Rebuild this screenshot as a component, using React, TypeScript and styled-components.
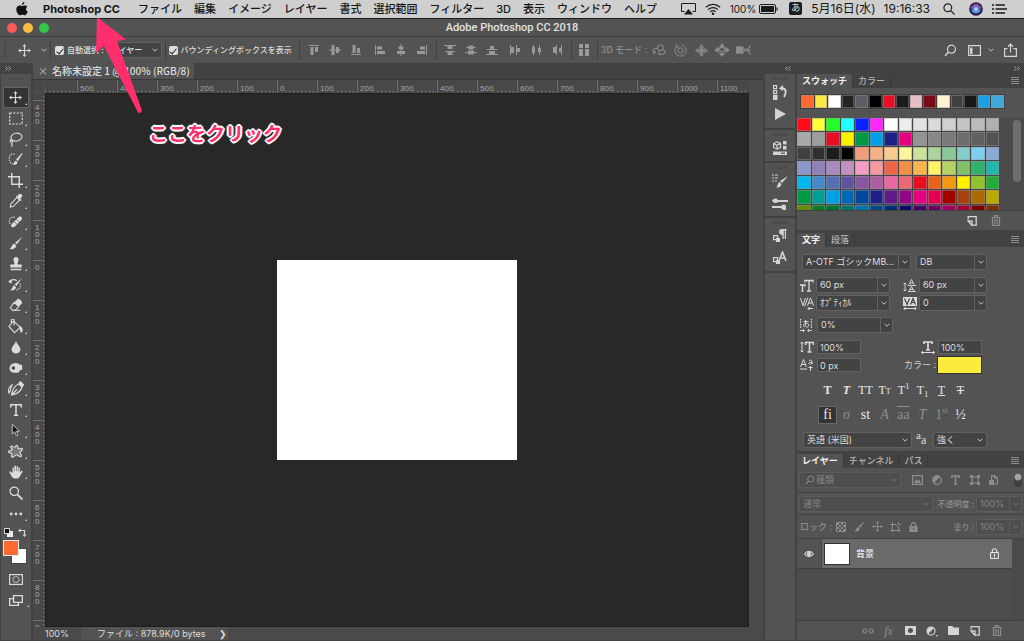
import React, { useLayoutEffect, useRef, useState } from "react";
import styled, { createGlobalStyle, css } from "styled-components";

const sans = `Inter, "Noto Sans CJK JP", sans-serif`;

const GlobalStyle = createGlobalStyle`
  * { box-sizing: border-box; }
  html, body { margin: 0; padding: 0; background: #424242; }
  button, input, select { font: inherit; color: inherit; margin: 0; }
  svg { display: block; flex: none; }
`;

const Shell = styled.div`
  position: relative;
  display: flex;
  flex-direction: column;
  height: 100vh;
  overflow: hidden;
  background: #424242;
  color: #dedede;
  font: 9px/12px ${sans};
  white-space: nowrap;
`;

/* ---------- shared pieces ---------- */

const IconButton = styled.button<{ $w?: number; $h?: number; $dim?: boolean; $on?: boolean }>`
  display: flex;
  align-items: center;
  justify-content: center;
  flex: none;
  width: ${(p) => p.$w ?? 21}px;
  height: ${(p) => p.$h ?? 20}px;
  padding: 0;
  border: 0;
  border-radius: 2px;
  background: ${(p) => (p.$on ? "#343434" : "none")};
  color: ${(p) => (p.$dim ? "#8c8c8c" : "#d4d4d4")};
`;

const Spacer = styled.div`
  flex: 1;
`;

type IconProps = { w?: number; h?: number; box?: string; children: React.ReactNode };
const Icon = ({ w = 16, h = 16, box = "0 0 16 16", children }: IconProps) => (
  <svg width={w} height={h} viewBox={box} fill="none" stroke="currentColor" strokeWidth="1.2" aria-hidden="true">
    {children}
  </svg>
);

const Chevron = ({ size = 6 }: { size?: number }) => (
  <svg width={size} height={size} viewBox="0 0 6 6" fill="none" stroke="currentColor" strokeWidth="1" opacity=".85" aria-hidden="true">
    <path d="M.6 1.8 3 4.2l2.4-2.4" />
  </svg>
);

const Field = styled.div<{ $w: number; $split?: boolean; $dim?: boolean }>`
  display: grid;
  grid-template-columns: 1fr 12px;
  align-items: center;
  flex: none;
  width: ${(p) => p.$w}px;
  height: 16px;
  border: 1px solid ${(p) => (p.$dim ? "#5c5c5c" : "#626262")};
  border-radius: 2px;
  background: ${(p) => (p.$dim ? "#4e4e4e" : "#434343")};
  color: ${(p) => (p.$dim ? "#7c7c7c" : "#dedede")};
  select {
    grid-area: 1 / 1 / 2 / 3;
    width: 100%;
    height: 14px;
    padding: 0 12px 0 3px;
    border: 0;
    background: none;
    appearance: none;
    line-height: 14px;
    text-overflow: ellipsis;
  }
  > span {
    grid-area: 1 / 2 / 2 / 3;
    display: flex;
    align-items: center;
    justify-content: center;
    height: 14px;
    pointer-events: none;
    ${(p) => p.$split && css`border-left: 1px solid ${p.$dim ? "#5c5c5c" : "#626262"};`}
  }
`;

type SelectProps = { label: string; value: string; w: number; split?: boolean; dim?: boolean };
const Select = ({ label, value, w, split, dim }: SelectProps) => (
  <Field $w={w} $split={split} $dim={dim}>
    <select aria-label={label} defaultValue={value}>
      <option>{value}</option>
    </select>
    <span><Chevron /></span>
  </Field>
);

/* ---------- system menu bar ---------- */

const MenuBar = styled.header`
  display: flex;
  align-items: center;
  flex: none;
  height: 19px;
  padding: 0 17px 1px 16px;
  border-bottom: 1px solid #1c1c1c;
  background: #cfcfcf;
  color: #161616;
  font-size: 11px;
`;

const MenuList = styled.nav`
  display: flex;
  align-items: center;
  gap: 12px;
  margin-left: 15px;
`;

const MenuItem = styled.button<{ $bold?: boolean }>`
  margin-right: ${(p) => (p.$bold ? 6 : 0)}px;
  padding: 0;
  border: 0;
  background: none;
  font-weight: ${(p) => (p.$bold ? 700 : 500)};
`;

const StatusArea = styled.div`
  display: flex;
  align-items: center;
  margin-left: auto;
`;

const Battery = styled.div`
  display: flex;
  align-items: center;
  gap: 3px;
  margin: 0 11px 0 9px;
  font-size: 10px;
`;

const InputSource = styled.div`
  width: 13px;
  height: 13px;
  margin-right: 9px;
  border-radius: 2px;
  background: #1d1d1d;
  color: #e4e4e4;
  font-size: 9px;
  line-height: 12px;
  text-align: center;
`;

const Clock = styled.time`
  display: flex;
  gap: 8px;
  margin-right: 13px;
  font-size: 12px;
  line-height: 14px;
`;

const menus = ["ファイル", "編集", "イメージ", "レイヤー", "書式", "選択範囲", "フィルター", "3D", "表示", "ウィンドウ", "ヘルプ"];

const SystemBar = () => (
  <MenuBar>
    <svg width="12" height="14" viewBox="0 0 12 14" fill="#111" aria-label="Apple">
      <path d="M8.300 0c.1 1.600-1 2.900-2.500 3C5.700 1.500 7 .2 8.300 0ZM11.300 4.700C9.400 6 9.700 8.700 11.800 9.600 11.100 11.600 9.900 13.300 8.800 13.300 7.900 13.300 7.500 12.800 6.400 12.800 5.300 12.800 4.800 13.300 4 13.300 2.400 13.300.3 10.100.3 7.300.3 4.800 1.900 3.400 3.600 3.400 4.700 3.400 5.500 4.100 6.200 4.100 6.900 4.100 7.800 3.400 9 3.400c.9 0 1.800.500 2.300 1.300Z" />
    </svg>
    <MenuList>
      <MenuItem $bold>Photoshop CC</MenuItem>
      {menus.map((m) => <MenuItem key={m}>{m}</MenuItem>)}
    </MenuList>
    <StatusArea>
      <svg width="15" height="12" viewBox="0 0 15 12" fill="none" stroke="#1b1b1b" aria-label="AirPlay">
        <path d="M3.500 8.500H.5v-8h14v8h-3" /><path d="M7.500 6 12 11.500H3Z" fill="#1b1b1b" stroke="none" />
      </svg>
      <svg width="25" height="12" viewBox="-9 0 25 12" fill="none" stroke="#1b1b1b" strokeWidth="1.200" aria-label="Wi-Fi">
        <path d="M.8 4.200a10.500 10.500 0 0 1 14.400 0M3 6.600a7.300 7.300 0 0 1 10 0M5.200 8.900a4.200 4.200 0 0 1 5.600 0" />
        <circle cx="8" cy="10.700" r=".7" fill="#1b1b1b" />
      </svg>
      <Battery>
        100%
        <svg width="19" height="10" viewBox="0 0 19 10" fill="#1b1b1b" aria-hidden="true">
          <rect x=".5" y=".5" width="16" height="9" rx="1.500" fill="none" stroke="#1b1b1b" />
          <rect x="2" y="2" width="13" height="6" /><path d="M17.500 3v4l1.200-1V4Z" />
        </svg>
      </Battery>
      <InputSource>あ</InputSource>
      <Clock><span>5月16日(水)</span><span>19:16:33</span></Clock>
      <svg width="12" height="12" viewBox="0 0 12 12" fill="none" stroke="#222" strokeWidth="1.200" aria-label="検索">
        <circle cx="4.800" cy="4.800" r="3.900" /><path d="m7.700 7.700 3.800 3.800" />
      </svg>
      <svg width="37" height="14" viewBox="-14 0 37 14" aria-label="Siri">
        <defs>
          <radialGradient id="siri"><stop offset="0" stopColor="#dff" /><stop offset=".4" stopColor="#5a7bd8" /><stop offset=".75" stopColor="#43246f" /><stop offset="1" stopColor="#15152a" /></radialGradient>
        </defs>
        <circle cx="7" cy="7" r="6.800" fill="url(#siri)" />
        <path d="M2 6Q7-1 12 6" stroke="#d455a2" fill="none" /><path d="M3 9q4 3 8 0" stroke="#37c8dc" fill="none" />
      </svg>
      <svg width="15" height="10" viewBox="0 0 15 10" stroke="#1b1b1b" strokeWidth="1.400" aria-label="通知">
        <path d="M0 1h2M3.500 1H13M0 5h2M3.500 5H15M0 9h2M3.500 9H13" />
      </svg>
    </StatusArea>
  </MenuBar>
);

/* ---------- window title ---------- */

const TitleBar = styled.div`
  display: grid;
  grid-template-columns: 60px 1fr 60px;
  align-items: center;
  flex: none;
  height: 18px;
  border-bottom: 1px solid #3e3e3e;
  background: #535353;
  h1 { margin: 0; font: 500 11px/14px Roboto, sans-serif; text-align: center; color: #e2e2e2; }
`;

const Lights = styled.div`
  display: flex;
  gap: 6px;
  padding-left: 7px;
`;

const Light = styled.button<{ $c: string }>`
  width: 10px;
  height: 10px;
  padding: 0;
  border: 0;
  border-radius: 50%;
  background: ${(p) => p.$c};
`;

/* ---------- options bar ---------- */

const OptionsBar = styled.div`
  display: flex;
  align-items: center;
  flex: none;
  height: 26px;
  padding: 0 1px 0 4px;
  background: #535353;
  font-size: 8px;
  font-weight: 500;
`;

const Divider = styled.i<{ $m?: number }>`
  flex: none;
  width: 1px;
  height: 18px;
  margin: 0 ${(p) => p.$m ?? 4}px;
  background: #3f3f3f;
`;

const Check = styled.label`
  display: flex;
  align-items: center;
  gap: 3px;
  input {
    display: grid;
    place-content: center;
    width: 9px;
    height: 9px;
    border-radius: 2px;
    background: #dedede;
    appearance: none;
  }
  input:checked::before {
    content: "";
    width: 3px;
    height: 6px;
    border: solid #222;
    border-width: 0 1px 1px 0;
    transform: rotate(40deg);
  }
`;

const Group = styled.div<{ $gap?: number; $ml?: number }>`
  display: flex;
  align-items: center;
  gap: ${(p) => p.$gap ?? 0}px;
  margin-left: ${(p) => p.$ml ?? 0}px;
`;

const ModeLabel = styled.span`
  width: 48px;
  color: #909090;
  font-size: 9px;
`;

const Move = ({ size = 14 }: { size?: number }) => (
  <Icon w={size} h={size} box="0 0 14 14">
    <path d="M7 2v10M2 7h10" />
    <path d="m7 0 2.200 2.800H4.800ZM7 14l2.200-2.800H4.800ZM0 7l2.800-2.200v4.400ZM14 7l-2.800-2.200v4.400Z" fill="currentColor" stroke="none" />
  </Icon>
);

const alignA = [
  ["上端揃え", "M1 1h10v1H1ZM2.500 3h3v8h-3ZM7 3h3v5H7Z"],
  ["垂直中央揃え", "M0 5.500h12v1H0ZM2.500 1h3v10h-3ZM7 3h3v6H7Z"],
  ["下端揃え", "M1 10h10v1H1ZM2.500 1h3v8h-3ZM7 4h3v5H7Z"],
];
const alignB = [
  ["左端揃え", "M1 1h1v10H1ZM3 2.500h5v3H3ZM3 7h8v3H3Z"],
  ["水平中央揃え", "M5.500 0h1v12h-1ZM3.500 2.500h5v3h-5ZM2 7h8v3H2Z"],
  ["右端揃え", "M10 1h1v10h-1ZM4 2.500h5v3H4ZM1 7h8v3H1Z"],
];
const distribute = [
  ["上端を分布", "M0 1h12v1H0ZM3.500 2h5v3h-5ZM1 7h10v1H1ZM3.500 8h5v3h-5Z"],
  ["垂直中央を分布", "M1 3h10v1H1ZM3.500 1.500h5v4h-5ZM0 8h12v1H0ZM3 6.500h6v4H3Z"],
  ["下端を分布", "M1 5h10v1H1ZM4 2h4v3H4ZM0 10h12v1H0ZM3 7h6v3H3Z"],
  ["左端を分布", "M1 1h1v10H1ZM2 3h3v6H2ZM7 1h1v10H7ZM8 4h3v4H8Z"],
  ["水平中央を分布", "M3 1h1v10H3ZM2 3h3v6H2ZM9 1h1v10H9ZM8 4h3v4H8Z"],
  ["右端を分布", "M5 1h1v10H5ZM2 3h3v6H2ZM10 1h1v10h-1ZM8 4h2v4H8Z"],
];

const AlignSet = ({ items }: { items: string[][] }) => (
  <>
    {items.map(([name, d]) => (
      <IconButton key={name} aria-label={name} $dim>
        <svg width="12" height="12" viewBox="0 0 12 12" fill="#999" aria-hidden="true"><path d={d} /></svg>
      </IconButton>
    ))}
  </>
);

const Search = ({ size = 13 }: { size?: number }) => (
  <Icon w={size} h={size} box="0 0 13 13"><circle cx="7.500" cy="5.200" r="4" /><path d="M4.600 8 1 11.800" strokeWidth="1.500" /></Icon>
);

const Options = () => (
  <OptionsBar>
    <svg width="2" height="16" viewBox="0 0 2 16" stroke="#3f3f3f" strokeDasharray="1 1" aria-hidden="true"><path d="M1 0v16" strokeWidth="2" /></svg>
    <IconButton aria-label="移動ツール" $w={36}><Move size={13} /></IconButton>
    <IconButton aria-label="ツールプリセット" $w={4} $h={16}><Chevron /></IconButton>
    <Divider />
    <Check><input type="checkbox" defaultChecked />自動選択 :</Check>
    <Group $ml={3}><Select label="自動選択" value="レイヤー" w={55} /></Group>
    <Divider $m={3} />
    <Check><input type="checkbox" defaultChecked />バウンディングボックスを表示</Check>
    <Group $ml={3}><Divider /></Group>
    <AlignSet items={alignA} />
    <Group $ml={3}><AlignSet items={alignB} /></Group>
    <Divider $m={3} />
    <AlignSet items={distribute.slice(0, 3)} />
    <Group $ml={2}><AlignSet items={distribute.slice(3)} /></Group>
    <Divider $m={3} />
    <IconButton aria-label="自動整列" $dim $w={19}>
      <svg width="10" height="12" viewBox="0 0 10 12" fill="#999" aria-hidden="true"><path d="M0 0h4v4H0ZM6 0h4v4H6ZM0 5h4v7H0ZM6 5h4v7H6Z" /></svg>
    </IconButton>
    <Divider $m={3} />
    <ModeLabel>3D モード :</ModeLabel>
    <IconButton aria-label="3D オブジェクトを回転" $dim>
      <Icon w={14} h={14}><circle cx="9.500" cy="5.500" r="3.200" /><path d="M6.500 6C1 5.500-.5 9 3.500 11M12 7.500c5 2 3.500 5.500-2 5.500M9 10c-2 0-2 3 0 3h2M3.500 8.500v3h-3" /></Icon>
    </IconButton>
    <IconButton aria-label="3D オブジェクトをロール" $dim>
      <Icon w={13} h={13}><circle cx="8" cy="8" r="3.200" /><path d="M3 3a7 7 0 1 0 6-2M3 0v3.500h3.500" /></Icon>
    </IconButton>
    <IconButton aria-label="3D オブジェクトをドラッグ" $dim>
      <Icon w={13} h={13}><path d="M8 2v12M2 8h12" strokeWidth="2" /><path d="m8 .5 2.500 3.500-2.500 3L5.500 4ZM8 15.500l2.500-3.500L8 9l-2.500 3ZM.5 8 4 5.500 7 8l-3 2.500ZM15.500 8 12 5.500 9 8l3 2.500Z" /></Icon>
    </IconButton>
    <IconButton aria-label="3D オブジェクトをスライド" $dim>
      <Icon w={14} h={14}><circle cx="8" cy="7.500" r="2.800" /><path d="m8 1 2 3H6ZM0 8l3.500-2.500v5ZM16 8l-3.500-2.500v5ZM8 15l2.500-3h-5Z" fill="currentColor" /></Icon>
    </IconButton>
    <IconButton aria-label="3D カメラをズーム" $dim>
      <Icon w={15} h={12} box="0 0 16 12"><path d="M0 2h8v8H0ZM8 6l3-2.500v5Z" fill="currentColor" stroke="none" /><path d="m15.500 1-3.500 5 3.500 5M12 6h4" /></Icon>
    </IconButton>
    <Spacer />
    <IconButton aria-label="検索" $w={26}><Search /></IconButton>
    <IconButton aria-label="ワークスペース" $w={22}>
      <Icon w={13} h={11} box="0 0 13 11"><path d="M.6.600h11.800v9.800H.6Z" /><path d="M2 2.500h2.500v6.500H2Z" fill="currentColor" stroke="none" /></Icon>
    </IconButton>
    <IconButton aria-label="ワークスペースの一覧" $w={12}><Chevron /></IconButton>
    <IconButton aria-label="共有" $w={26}>
      <Icon w={13} h={14} box="0 0 13 14"><path d="M3.500 5.600H.6v7.800h11.800V5.600H9.500M6.500 9.500V1M4 3.500 6.500 1 9 3.500" /></Icon>
    </IconButton>
  </OptionsBar>
);

/* ---------- tool column ---------- */

const Workspace = styled.div`
  display: flex;
  flex: 1;
  min-height: 0;
  gap: 2px;
  padding: 0 0 1px 1px;
`;

const Column = styled.div<{ $w: number }>`
  display: flex;
  flex-direction: column;
  flex: none;
  width: ${(p) => p.$w}px;
`;

const Collapse = styled.button<{ $left?: boolean }>`
  display: flex;
  align-items: center;
  justify-content: ${(p) => (p.$left ? "flex-start" : "flex-end")};
  flex: none;
  height: 11px;
  padding: 0 4px;
  border: 0;
  background: #424242;
  color: #b4b4b4;
`;

const Arrows = ({ back }: { back?: boolean }) => (
  <Icon w={6} h={5} box="0 0 6 5">
    <path d={back ? "M2.600.500.6 2.500l2 2M5.600.500l-2 2 2 2" : "m.5.500 2 2-2 2M3.500.500l2 2-2 2"} strokeWidth=".9" />
  </Icon>
);

const ToolBody = styled.div`
  display: flex;
  flex-direction: column;
  flex: 1;
  background: #535353;
`;

const Grip = styled.div`
  flex: none;
  width: 16px;
  height: 3px;
  margin: 3px auto 0;
  background: repeating-linear-gradient(90deg, #444 0 1px, #535353 1px 2px);
`;

const ToolGrid = styled.div`
  display: grid;
  grid-auto-rows: 1fr;
  height: 437px;
  margin: 7px 2px 0;
`;

const Tool = styled.button<{ $on?: boolean }>`
  position: relative;
  display: flex;
  align-items: center;
  justify-content: center;
  padding: 0 1px 0 0;
  border: 1px solid ${(p) => (p.$on ? "#646464" : "transparent")};
  border-radius: 2px;
  background: ${(p) => (p.$on ? "#343434" : "none")};
  color: #dcdcdc;
  &::after {
    content: "";
    position: absolute;
    right: 1px;
    bottom: 2px;
    border: solid transparent;
    border-width: 2px 0 0 2px;
    border-bottom: 2px solid #cfcfcf;
  }
  &.plain::after { display: none; }
`;

const tools: [string, React.ReactNode][] = [
  ["移動", <Move size={13} />],
  ["長方形選択", <Icon w={14} h={13} box="0 0 14 13"><rect x=".7" y="1" width="12.600" height="11" strokeDasharray="2.200 1.300" /></Icon>],
  ["なげなわ", <Icon w={15} h={15}><ellipse cx="9" cy="5.500" rx="6" ry="4.200" transform="rotate(-10 9 5.500)" /><path d="M4 8c-2.500.5-2 3.500 0 3s.5-3-.5-2M4 11.500c1 1.500.5 2.500-.5 4" /></Icon>],
  ["クイック選択", <Icon w={15} h={15}><path d="M7 2.500C3 1 1 4 1.500 8s4 6 6.500 4" strokeDasharray="1.500 1" /><path d="m15.500 1.500-5 8-2-1.200 6-7ZM8 9.200l2 1.400c0 3-2.500 3.400-5 3 1.600-.6 1.200-3.600 3-4.400Z" fill="currentColor" stroke="none" /></Icon>],
  ["切り抜き", <Icon w={15} h={15}><path d="M4 0v12h12M0 4h12v12" strokeWidth="1.500" /></Icon>],
  ["スポイト", <Icon w={14} h={14}><path d="m9 4 3 3-7 7-3.500.8L2 11.500Z" /><path d="m8 2.500 5.500 5.500 1-1-1.500-2c3-2 2.500-4.500.5-5s-3 .5-3.500 2.500L9 1.500Z" fill="currentColor" stroke="none" /></Icon>],
  ["修復ブラシ", <Icon w={15} h={15}><path d="M2.500 9.500C-.5 6 2.500 1 8 2.500" strokeDasharray="1.500 1" /><path d="m4 9.500 7.500-7.500c2-1.500 4.500 1 3 3L7 12.500c-2 2-5-.8-3-3Z" fill="currentColor" stroke="none" /><path d="m6.500 7 3 3M9 4.500l3 3" stroke="#535353" strokeWidth=".8" /></Icon>],
  ["ブラシ", <Icon w={14} h={14}><path d="m15.500.5-6.500 9-2.200-1.600ZM6 8.800l2.200 1.800c0 4-4 4.800-7.700 4.400C3 14 3 9.500 6 8.800Z" fill="currentColor" stroke="none" /></Icon>],
  ["スタンプ", <Icon w={14} h={14}><path d="M8 0a3 3 0 0 1 2.700 4.200C10 6 9.600 7 10 8.500h4.500V12h-13V8.500H6C6.400 7 6 6 5.300 4.200A3 3 0 0 1 8 0ZM2 13.500h12V15H2Z" fill="currentColor" stroke="none" /></Icon>],
  ["ヒストリーブラシ", <Icon w={15} h={15}><path d="m15 1-6 8.500-2-1.500ZM6.500 9l2 1.600C8 14 5.500 14.500 2 14.300 5 13 4.500 9.500 6.500 9Z" fill="currentColor" stroke="none" /><path d="M2 4.500C5 2 8 3 9.500 4" /><path d="m0 5 4-3v5Z" fill="currentColor" stroke="none" /><path d="M13 7c1 3-1 6-4 7" strokeDasharray="1.500 1" /></Icon>],
  ["消しゴム", <Icon w={14} h={14}><path d="m6 5 5 5-4 4H4L1.500 11Z" /><path d="m6 5 4-4c2-.5 5 3 5 5l-4 4Z" fill="currentColor" stroke="none" /><path d="M4 14h9" /></Icon>],
  ["塗りつぶし", <Icon w={15} h={15}><path d="m6 2 7 7-6 5.500L1 8ZM3.500 4V1c1-1.500 3-1 3 0v6" /><path d="M12 7c3 1 4 4 3.500 6s-2 1.500-2.500 0Z" fill="currentColor" stroke="none" /></Icon>],
  ["ぼかし", <Icon w={14} h={14}><path d="M8 1c1 3.500 5 6.500 5 9.500a5 5 0 0 1-10 0C3 7.500 7 4.500 8 1Z" fill="currentColor" stroke="none" /></Icon>],
  ["スポンジ", <Icon w={14} h={14}><path d="M4 3c4-1.500 7 0 8 1l3 .5v6L13 10l-2 3c-3 1-6 .5-8-.5C-.5 11 0 4 4 3Z" fill="currentColor" stroke="none" /><circle cx="5" cy="8" r="2" fill="#444" stroke="none" /></Icon>],
  ["ペン", <Icon w={16} h={16}><path d="M3.500 14C4 9 7 4 11 3l3 3c-1 4-5 7-10.500 8Zm0 0L9 8.500M4 4C1 5.500 0 9 1 12c2-2 1-5 3-8Z" /><path d="M11 2.500 12.500.800l3 3L14 5.500Z" fill="currentColor" /></Icon>],
  ["横書き文字", <Icon w={14} h={14}><path d="M2 5V2h12v3M8 2v12M5.500 14h5" strokeWidth="1.700" /></Icon>],
  ["パスコンポーネント選択", <Icon w={13} h={14}><path d="M4 1v12l3-3 2 5 2-1-2-4.500h4Z" fill="#151515" strokeWidth="1" /></Icon>],
  ["カスタムシェイプ", <Icon w={15} h={15}><path d="M9.500 1.500c2 1 .5 2.500 1.500 3.500s3.500-1.500 4.300 0-2.300 2.500-2.500 4 2.700 3.500 1.200 4.500-3.500-2-5-2-2.500 3-4.500 2.500.5-3-.5-4-3 0-3.500-1.500S4 7 4.500 6 2 3.500 3 2.500s2.500 1 4 1 1-2.500 2.500-2Z" fill="#777" /></Icon>],
  ["手のひら", <Icon w={14} h={14}><path d="M4 9V3.500c0-1.300 1.500-1.300 1.600 0V7h.6V1.500C6.300.3 8 .3 8 1.500V7h.6V2c0-1.200 1.600-1.200 1.600 0v5.200h.6V3.500c0-1.200 1.600-1.200 1.600 0v5l1.600-1.800c1-.8 2 .2 1.300 1.300l-3 5c-1 2-2 2.500-4 2.500-3 0-4.500-1-5.500-3L.6 8.500C.2 7.300 1.500 6.800 2.300 7.700Z" fill="currentColor" stroke="none" /></Icon>],
  ["ズーム", <Icon w={14} h={14}><circle cx="6" cy="6" r="4.800" strokeWidth="1.400" /><path d="m9.500 9.500 6 6" strokeWidth="2" /></Icon>],
  ["ツールバーを編集", <Icon w={14} h={14}><g fill="currentColor" stroke="none"><circle cx="2.500" cy="8" r="1.600" /><circle cx="8" cy="8" r="1.600" /><circle cx="13.500" cy="8" r="1.600" /></g></Icon>],
];

const ColorReset = styled.div`
  display: flex;
  justify-content: space-between;
  padding: 3px 4px 0 3px;
`;

const ColorPair = styled.div`
  position: relative;
  flex: none;
  width: 24px;
  height: 24px;
  margin: 3px 0 4px 2px;
`;

const ColorChip = styled.button<{ $c: string; $back?: boolean }>`
  position: absolute;
  ${(p) => (p.$back ? "right: 0; bottom: 0;" : "left: 0; top: 0;")}
  width: 16px;
  height: 16px;
  padding: 0;
  border: 1px solid ${(p) => (p.$back ? "#474747" : "#e8e8e8")};
  background: ${(p) => p.$c};
`;

const Toolbar = () => (
  <Column $w={30}>
    <Collapse $left aria-label="ツールバーを折りたたむ"><Arrows /></Collapse>
    <ToolBody>
      <Grip />
      <ToolGrid>
        {tools.map(([name, icon], i) => (
          <Tool key={name} aria-label={name} $on={i === 0} className={name === "ズーム" ? "plain" : undefined}>{icon}</Tool>
        ))}
      </ToolGrid>
      <ColorReset>
        <IconButton aria-label="初期設定の描画色" $w={9} $h={10}>
          <Icon w={9} h={9} box="0 0 9 9"><path d="M3 3h6v6H3Z" fill="#eee" stroke="none" /><path d="M.5.500h5v5h-5Z" fill="#111" stroke="#ddd" strokeWidth="1" /></Icon>
        </IconButton>
        <IconButton aria-label="描画色と背景色を入れ替え" $w={9} $h={10}>
          <Icon w={9} h={9} box="0 0 9 9"><path d="M1 2.500h5.500V8" /><path d="M0 2.500 2.500.5v4ZM6.500 9l-2-2.500h4Z" fill="currentColor" stroke="none" /></Icon>
        </IconButton>
      </ColorReset>
      <ColorPair>
        <ColorChip $c="#fff" $back aria-label="背景色" />
        <ColorChip $c="#fb6a30" aria-label="描画色" />
      </ColorPair>
      <Tool aria-label="クイックマスク" className="plain">
        <Icon w={14} h={20} box="0 -5 14 20"><rect x=".600" y=".600" width="12.800" height="9.800" /><circle cx="7" cy="5.500" r="3" strokeDasharray="1.200 .8" /></Icon>
      </Tool>
      <Tool aria-label="スクリーンモード">
        <Icon w={14} h={18} box="0 -4 14 18"><path d="M4.600.600h8.800v6.800H4.600ZM4 3.600H.6v6.800h8.800V8" strokeWidth="1.400" /></Icon>
      </Tool>
    </ToolBody>
  </Column>
);

/* ---------- document ---------- */

const DocArea = styled.main`
  display: flex;
  flex-direction: column;
  flex: 1;
  min-width: 0;
`;

const DocTabs = styled.div`
  display: flex;
  flex: none;
  height: 17px;
  border-bottom: 1px solid #383838;
`;

const DocTab = styled.div`
  display: flex;
  align-items: center;
  gap: 7px;
  padding: 0 4px 0 5px;
  background: #535353;
  font: 500 10px/14px "Noto Sans CJK JP", sans-serif;
  button { width: 7px; padding: 0; border: 0; background: none; color: #b5b5b5; line-height: 12px; }
`;

const RulerRow = styled.div`
  display: flex;
  flex: none;
  height: 13px;
`;

const Corner = styled.div`
  flex: none;
  width: 12px;
  border: 1px dotted #5c5c5c;
  border-width: 0 1px 1px 0;
  background: #484848;
`;

const RulerTrack = styled.div<{ $vertical?: boolean }>`
  display: flex;
  flex-direction: ${(p) => (p.$vertical ? "column" : "row")};
  flex: ${(p) => (p.$vertical ? "none" : "1")};
  min-width: 0;
  width: ${(p) => (p.$vertical ? "12px" : "auto")};
  overflow: hidden;
  background: #484848;
  color: #a6a6a6;
  font: 8px/7px "Liberation Sans", sans-serif;
`;

const Mark = styled.div<{ $vertical?: boolean; $first?: boolean }>`
  flex: none;
  ${(p) =>
    p.$vertical
      ? css`
          height: 40px;
          padding: 3px 5px 0 2px;
          margin-top: ${p.$first ? -33 : 0}px;
          border-top: 1px solid #6c6c6c;
          white-space: normal;
          word-break: break-all;
          background: repeating-linear-gradient(180deg, transparent 0 3px, #686868 3px 4px) right / 2px 100% no-repeat;
        `
      : css`
          width: 40px;
          height: 13px;
          padding: 5px 0 0 2px;
          margin-left: ${p.$first ? -8 : 0}px;
          border-left: 1px solid #6c6c6c;
          background: repeating-linear-gradient(90deg, transparent 0 3px, #686868 3px 4px) bottom / 100% 3px no-repeat;
        `}
  span { background: #484848; }
`;

const STEP = 40;

const Ruler = ({ vertical, origin, offset }: { vertical?: boolean; origin: number; offset: number }) => {
  const ref = useRef<HTMLDivElement>(null);
  const [length, setLength] = useState(0);
  useLayoutEffect(() => {
    const el = ref.current!;
    const measure = () => setLength(vertical ? el.clientHeight : el.clientWidth);
    measure();
    const observer = new ResizeObserver(measure);
    observer.observe(el);
    return () => observer.disconnect();
  }, [vertical]);
  const count = Math.ceil((length + offset) / STEP);
  return (
    <RulerTrack ref={ref} $vertical={vertical}>
      {Array.from({ length: count }, (_, i) => (
        <Mark key={i} $vertical={vertical} $first={i === 0}>
          <span>{i === 0 ? "" : Math.abs(i * 100 - origin)}</span>
        </Mark>
      ))}
    </RulerTrack>
  );
};

const CanvasRow = styled.div`
  display: flex;
  flex: 1;
  min-height: 0;
`;

const Canvas = styled.div`
  position: relative;
  flex: 1;
  overflow: hidden;
  background: #282828;
  box-shadow: inset 0 0 0 1px #1f1f1f;
`;

const Artboard = styled.div`
  position: absolute;
  left: 232px;
  top: 167px;
  width: 240px;
  height: 200px;
  background: #fff;
`;

const ScrollTrack = styled.div`
  flex: none;
  width: 14px;
  background: #4b4b4b;
`;

const StatusBar = styled.footer`
  display: flex;
  align-items: center;
  flex: none;
  height: 13px;
  padding-left: 12px;
  background: #4a4a4a;
  > span { width: 36px; }
`;

const FileInfo = styled.div`
  display: flex;
  align-items: center;
  gap: 13px;
  height: 13px;
  padding: 0 1px 0 16px;
  background: #535353;
  button { padding: 0; border: 0; background: none; line-height: 12px; }
`;

const Document = () => (
  <DocArea>
    <DocTabs>
      <DocTab><button aria-label="閉じる">×</button>名称未設定 1 @ 100% (RGB/8)</DocTab>
    </DocTabs>
    <RulerRow>
      <Corner />
      <Ruler origin={600} offset={8} />
      <ScrollTrack />
    </RulerRow>
    <CanvasRow>
      <Ruler vertical origin={500} offset={33} />
      <Canvas><Artboard /></Canvas>
      <ScrollTrack />
    </CanvasRow>
    <StatusBar>
      <span>100%</span>
      <FileInfo>ファイル : 878.9K/0 bytes<button aria-label="ステータスの表示項目">❯</button></FileInfo>
    </StatusBar>
  </DocArea>
);

/* ---------- collapsed dock ---------- */

const DockGroup = styled.div<{ $h: number }>`
  display: flex;
  flex-direction: column;
  align-items: center;
  flex: none;
  height: ${(p) => p.$h}px;
  border-bottom: 2px solid #404040;
  background: #535353;
`;

const DockFill = styled.div`
  flex: 1;
  background: #535353;
`;

const Dock = () => (
  <Column $w={30}>
    <Collapse aria-label="パネルを展開"><Arrows back /></Collapse>
    <DockGroup $h={56}>
      <Grip />
      <IconButton aria-label="ヒストリー" $w={28} $h={24}>
        <Icon w={14} h={15} box="0 0 14 15"><path d="M.600.600h3v3h-3ZM.600 5.600h3v3h-3Z" /><path d="M0 10h4.500v5H0Z" fill="currentColor" stroke="none" /><path d="M8 3c5 0 6 4 3 9" strokeWidth="1.800" /><path d="m6 3.500 4-3.500v6Z" fill="currentColor" stroke="none" /></Icon>
      </IconButton>
      <IconButton aria-label="アクション" $w={28} $h={20}>
        <Icon w={11} h={12} box="0 0 11 12"><path d="m0 0 11 6-11 6Z" fill="currentColor" stroke="none" /></Icon>
      </IconButton>
    </DockGroup>
    <DockGroup $h={33}>
      <Grip />
      <IconButton aria-label="属性" $w={28} $h={23}>
        <Icon w={14} h={14} box="0 0 14 14"><path d="m4 .8 3.500 1.700v4L4 8.200.6 6.500v-4ZM.600 2.500 4 4.300l3.500-1.800M4 4.300v4" /><path d="M10 0h3.500v3.500H10ZM10 5h3.500v3.500H10ZM0 10.500h14V14H0Z" fill="currentColor" stroke="none" /><path d="M8 12.200h4" stroke="#535353" /></Icon>
      </IconButton>
    </DockGroup>
    <DockGroup $h={55}>
      <Grip />
      <IconButton aria-label="ブラシプリセット" $w={28} $h={23}>
        <Icon w={16} h={14} box="0 0 16 14"><path d="M0 1h2M3 1h3M0 4h2M3 4h3M0 7h2M3 7h2" /><path d="m16 2-6 7-2-2ZM7.500 8l2 2C9 13 7 13.500 4 13.500 6 12 5.500 9 7.500 8Z" fill="currentColor" stroke="none" /></Icon>
      </IconButton>
      <IconButton aria-label="ブラシ設定" $w={28} $h={23}>
        <Icon w={16} h={12} box="0 0 16 12"><path d="M0 3c2-3 4-3 6-1h10v2H6C4 6 2 5 0 3ZM0 8h9c2-2 5-2 5 1v3c-2 .5-4 0-5-2H0Z" fill="currentColor" stroke="none" /></Icon>
      </IconButton>
    </DockGroup>
    <DockGroup $h={55}>
      <Grip />
      <IconButton aria-label="段落スタイル" $w={28} $h={24}>
        <Icon w={14} h={14} box="0 0 14 14"><path d="M.6 6.600h4v4h-4Z" /><path d="M3 9h4v4H3ZM9 0h4.500v1.500H13V10h-1.200V1.500h-1V10H9.500V6C5 6 5 0 9 0Z" fill="currentColor" stroke="none" /></Icon>
      </IconButton>
      <IconButton aria-label="文字スタイル" $w={28} $h={20}>
        <Icon w={14} h={14} box="0 0 14 14"><path d="M.6 6.600h4v4h-4Z" /><path d="M3 9h4v4H3Z" fill="currentColor" stroke="none" /><path d="m6 10 3.500-9 3.500 9M7.500 7h4" strokeWidth="1.600" /></Icon>
      </IconButton>
    </DockGroup>
    <DockFill />
  </Column>
);

/* ---------- right panels ---------- */

const Panel = styled.section<{ $h?: number }>`
  display: flex;
  flex-direction: column;
  flex: ${(p) => (p.$h ? "none" : "1")};
  min-height: 0;
  height: ${(p) => (p.$h ? `${p.$h}px` : "auto")};
  margin-bottom: ${(p) => (p.$h ? 3 : 0)}px;
  background: #535353;
`;

const Tabs = styled.div`
  display: flex;
  flex: none;
  height: 14px;
  background: #424242;
  > :last-child { margin-left: auto; }
`;

const TabButton = styled.button<{ $on?: boolean }>`
  padding: 0 5px;
  border: 0;
  border-right: 1px solid #3a3a3a;
  background: ${(p) => (p.$on ? "#535353" : "none")};
  color: ${(p) => (p.$on ? "#f0f0f0" : "#b4b4b4")};
  font-weight: ${(p) => (p.$on ? 700 : 500)};
  line-height: 12px;
`;

const TabBar = ({ items }: { items: string[] }) => (
  <Tabs>
    {items.map((t, i) => <TabButton key={t} $on={i === 0}>{t}</TabButton>)}
    <IconButton aria-label="パネルメニュー" $w={18} $h={13} $dim>
      <Icon w={8} h={7} box="0 0 8 7"><path d="M0 .5h8M0 2.500h8M0 4.500h8M0 6.500h8" strokeWidth="1" /></Icon>
    </IconButton>
  </Tabs>
);

const Recent = styled.div`
  display: grid;
  grid-template-columns: repeat(15, 1fr);
  gap: 1px;
  width: 205px;
  margin: 6px 0 9px 3px;
  padding: 1px;
  background: #404040;
`;

const SwatchArea = styled.div`
  display: flex;
  flex: 1;
  min-height: 0;
  justify-content: space-between;
  background: #4b4b4b;
`;

const SwatchGrid = styled.div`
  display: grid;
  grid-template-columns: repeat(14, 1fr);
  align-content: start;
  gap: 1px;
  width: 202px;
  overflow: hidden;
  background: #474747;
`;

const Swatch = styled.button<{ $c: string }>`
  aspect-ratio: 1;
  min-width: 0;
  padding: 0;
  border: 1px solid rgba(150, 150, 150, 0.45);
  background: ${(p) => p.$c};
`;

const ScrollThumb = styled.div`
  width: 8px;
  height: 62px;
  margin: 2px 3px 0 0;
  border-radius: 4px;
  background: #6e6e6e;
`;

const PanelFoot = styled.div`
  display: flex;
  align-items: center;
  justify-content: flex-end;
  flex: none;
  height: 20px;
  padding-right: 16px;
  border-top: 1px solid #404040;
  background: #535353;
`;

const recentColors = "fa6a32 fbe947 ffffff 242424 5c5e63 000000 e60f26 1b1b1b e6bfc6 7b0a17 fff3d3 404040 181818 1a9fe6 40a7d8".split(" ");
const swatchColors = `
ff0a1a ffff38 24ff2c 26ffff 0a22ff ff26ff ffffff ededed e3e3e3 dadada d0d0d0 c5c5c5 bcbcbc b0b0b0
a8a8a8 9d9d9d e60d24 fff000 009944 00a0e9 1d2087 e4007f 939393 878787 7a7a7a 6d6d6d 606060 525252
404040 303030 1c1c1c 000000 f19c7a f5b184 f9cb8c fff59b cbe09a abd49a 89c997 83ccc8 80cdf2 88abda
8c97cb 8f82bc aa89bd c490bf f19ec2 f29c9f ec6748 f19149 f8b551 fff465 b3d465 80c269 32b16c 22b5ae
00b7ee 448aca 556fb5 5f52a0 8957a1 ae5da1 ea68a2 eb6877 e60e20 eb6118 f39812 fff100 90c22e 22ac38
009944 009e96 00a0e9 0068b7 00479d 1d2088 601986 920783 e4007f e5004f a40000 a7400a ac6a00 b7aa00
638c0b 0f7c28 007130 00736d 0075a9 004986 002e73 100964 440062 6a005f a4005b a40035 7d0000 7f2d00
`.trim().split(/\s+/);

const NewIcon = () => (
  <Icon w={10} h={10} box="0 0 10 10"><path d="M1.200 3.500V.700h8v8.500H5.500M1 5h4v4.500Z" strokeWidth="1.300" /></Icon>
);
const TrashIcon = () => (
  <Icon w={10} h={11} box="0 0 10 11"><path d="M.5 2.500h9M3.500 2V.700h3V2M1.500 3v7.400h7V3M3.800 4v5M6.200 4v5" /></Icon>
);

const SwatchPanel = () => (
  <Panel $h={156}>
    <TabBar items={["スウォッチ", "カラー"]} />
    <Recent>{recentColors.map((c, i) => <Swatch key={i} $c={`#${c}`} aria-label={`#${c}`} />)}</Recent>
    <SwatchArea>
      <SwatchGrid>{swatchColors.map((c, i) => <Swatch key={i} $c={`#${c}`} aria-label={`#${c}`} />)}</SwatchGrid>
      <ScrollThumb />
    </SwatchArea>
    <PanelFoot>
      <IconButton aria-label="新規スウォッチ" $w={24}><NewIcon /></IconButton>
      <IconButton aria-label="スウォッチを削除" $w={24} $dim><TrashIcon /></IconButton>
    </PanelFoot>
  </Panel>
);

const CharBody = styled.div`
  display: flex;
  flex-direction: column;
  padding: 7px 3px 0;
`;

const CharRow = styled.div<{ $mt?: number; $gap?: number; $pl?: number }>`
  display: flex;
  align-items: center;
  gap: ${(p) => p.$gap ?? 0}px;
  height: 16px;
  margin-top: ${(p) => p.$mt ?? 2}px;
  padding-left: ${(p) => p.$pl ?? 0}px;
`;

const Glyph = styled.span<{ $w?: number }>`
  display: flex;
  align-items: center;
  justify-content: flex-start;
  flex: none;
  width: ${(p) => p.$w ?? 16}px;
  color: #dcdcdc;
`;

const AliasGlyph = styled.span`
  width: 17px;
  font: 12px/14px "Liberation Serif", serif;
  sup { font-size: 11px; line-height: 0; }
`;

const NumberBox = styled.input`
  flex: none;
  width: 44px;
  height: 14px;
  padding: 0 2px;
  border: 1px solid #626262;
  background: #434343;
`;

const ColorLabel = styled.span`
  width: 33px;
  color: #cfcfcf;
`;

const ColorBox = styled.button`
  width: 45px;
  height: 18px;
  padding: 0;
  border: 1px solid #333;
  background: #fbeb3c;
`;

const StyleRow = styled.div<{ $mt: number }>`
  display: flex;
  margin: ${(p) => p.$mt}px 0 0 18px;
`;

const StyleButton = styled.button<{ $on?: boolean; $dim?: boolean; $italic?: boolean; $bold?: boolean; $big?: boolean; $deco?: string }>`
  flex: none;
  width: 19px;
  height: 18px;
  padding: 0;
  border: 1px solid ${(p) => (p.$on ? "#686868" : "transparent")};
  background: ${(p) => (p.$on ? "#343434" : "none")};
  color: ${(p) => (p.$dim ? "#8e8e8e" : "#e6e6e6")};
  font: ${(p) => (p.$italic ? "italic" : "normal")} ${(p) => (p.$bold ? 700 : 400)} ${(p) => (p.$big ? 14 : 12)}px/14px "Liberation Serif", serif;
  text-decoration: ${(p) => p.$deco ?? "none"};
  sup, sub, small { font-size: 8px; line-height: 0; }
`;

const SizeIcon = () => <Icon w={14} h={13} box="0 0 14 13"><path d="M0 7V6h5v1.500M2.500 6v6M1.500 12h2M5 3.500V1.500h8v2M9 1.500V12M7 12h4" strokeWidth="1.300" /></Icon>;
const LeadIcon = () => <Icon w={13} h={13} box="0 0 13 13"><path d="M2 4v8M.5 5.500 2 4l1.500 1.500M.5 10.500 2 12l1.500-1.500M6 5.500l2.500-5 2.500 5M7 4h3M5 6.500h8M6 12l2.500-4.500L11 12M7 10.500h3M5 12.500h8" strokeWidth=".9" /></Icon>;
const KernIcon = () => <Icon w={14} h={13} box="0 0 14 13"><path d="M.5 1 3 8.500 5.500 1M8 .5 4.500 9.500M7.500 8.500 10.500 1 13.500 8.500M8.500 6h4M13 11.500H8M9.500 10 8 11.500 9.500 13" strokeWidth="1" /></Icon>;
const TrackIcon = () => <Icon w={14} h={13} box="0 0 14 13"><path d="M0 0h14v9H0Z" fill="currentColor" stroke="none" /><path d="m1.500 1.500 2.500 6 2.500-6M7.500 7.500 10 1.500l2.500 6M8.500 5.500h3" stroke="#444" /><path d="M1 11.500h12M2.500 10 1 11.500 2.500 13M11.500 10l1.500 1.500-1.500 1.500" strokeWidth="1" /></Icon>;
const TsumeIcon = () => <Icon w={12} h={13} box="0 0 12 13"><path d="M.500 0v9M11.500 0v9" strokeDasharray="1.500 1" /><path d="M3.500 2.500h5M5.500 1v5.500c0 2-3 1-2-.8S9 3.500 8.800 6 7 8 6 7.800M0 11.500h4M3 10l1.500 1.500L3 13M12 11.500H8M9 10l-1.500 1.500L9 13" strokeWidth=".9" /></Icon>;
const VScaleIcon = () => <Icon w={14} h={12} box="0 0 14 12"><path d="M2 1v10M.5 2.500 2 1l1.500 1.500M.5 9.500 2 11l1.500-1.500" strokeWidth="1" /><path d="M5.500 4V1.500h8V4M9.500 1.500V11M7.500 11h4" strokeWidth="1.500" /></Icon>;
const HScaleIcon = () => <Icon w={14} h={13} box="0 0 14 13"><path d="M3 3V1h8v2M7 1v8M5 9h4" strokeWidth="1.700" /><path d="M.500 11.500h13M2 10 .5 11.500 2 13M12 10l1.500 1.500L12 13" strokeWidth="1" /></Icon>;
const BaseIcon = () => <Icon w={13} h={12} box="0 0 13 12"><path d="m.5 8 3-7.500 3 7.500M1.500 5.500h4M0 10h7M9 1.500c3-1 3 .5 3 3.500V3.500c-4-.5-4 2-1.500 1.500M10.500 7v5M8.500 8.500h4" strokeWidth="1" /></Icon>;

const CharacterPanel = () => (
  <Panel $h={218}>
    <TabBar items={["文字", "段落"]} />
    <CharBody>
      <CharRow $mt={0} $gap={5} $pl={2}>
        <Select label="フォント" value="A-OTF ゴシックMB..." w={109} split />
        <Select label="フォントスタイル" value="DB" w={71} split />
      </CharRow>
      <CharRow $mt={7}>
        <Glyph><SizeIcon /></Glyph><Select label="サイズ" value="60 px" w={74} split />
        <Group $ml={13}><Glyph><LeadIcon /></Glyph><Select label="行送り" value="60 px" w={68} split /></Group>
      </CharRow>
      <CharRow>
        <Glyph><KernIcon /></Glyph><Select label="カーニング" value="ｵﾌﾟﾃｨｶﾙ" w={74} split />
        <Group $ml={13}><Glyph><TrackIcon /></Glyph><Select label="トラッキング" value="0" w={68} split /></Group>
      </CharRow>
      <CharRow $mt={6}>
        <Glyph $w={17}><TsumeIcon /></Glyph><Select label="文字ツメ" value="0%" w={76} split />
      </CharRow>
      <CharRow $mt={6}>
        <Glyph $w={17}><VScaleIcon /></Glyph><NumberBox aria-label="垂直比率" defaultValue="100%" />
        <Group $ml={60}><Glyph $w={17}><HScaleIcon /></Glyph><NumberBox aria-label="水平比率" defaultValue="100%" /></Group>
      </CharRow>
      <CharRow>
        <Glyph $w={17}><BaseIcon /></Glyph><NumberBox aria-label="ベースラインシフト" defaultValue="0 px" />
        <Group $ml={43}><ColorLabel>カラー :</ColorLabel><ColorBox aria-label="文字カラー" /></Group>
      </CharRow>
      <StyleRow $mt={8}>
        <StyleButton $bold>T</StyleButton>
        <StyleButton $italic $bold>T</StyleButton>
        <StyleButton>TT</StyleButton>
        <StyleButton>T<small>T</small></StyleButton>
        <StyleButton>T<sup>1</sup></StyleButton>
        <StyleButton>T<sub>1</sub></StyleButton>
        <StyleButton $deco="underline">T</StyleButton>
        <StyleButton $deco="line-through">T</StyleButton>
      </StyleRow>
      <StyleRow $mt={7}>
        <StyleButton $on $big>fi</StyleButton>
        <StyleButton $dim $italic $big>σ</StyleButton>
        <StyleButton $big>st</StyleButton>
        <StyleButton $dim $italic $big>A</StyleButton>
        <StyleButton $dim $big $deco="overline">aa</StyleButton>
        <StyleButton $dim $italic $big>T</StyleButton>
        <StyleButton $dim $big>1<sup>st</sup></StyleButton>
        <StyleButton $big>½</StyleButton>
      </StyleRow>
      <CharRow $mt={8} $pl={3}>
        <Select label="言語" value="英語 (米国)" w={109} />
        <Group $ml={4}><AliasGlyph><sup>a</sup>a</AliasGlyph></Group>
        <Select label="アンチエイリアス" value="強く" w={54} />
      </CharRow>
    </CharBody>
  </Panel>
);

const LayerRow = styled.div<{ $h: number }>`
  display: flex;
  align-items: center;
  flex: none;
  height: ${(p) => p.$h}px;
  padding: 0 2px;
  border-bottom: 1px solid #424242;
  color: #8e8e8e;
  font-weight: 500;
`;

const FilterField = styled.div`
  display: grid;
  align-items: center;
  > * { grid-area: 1 / 1; }
  > svg { margin-left: 6px; pointer-events: none; z-index: 1; }
  select { padding-left: 16px; }
`;

const Toggle = styled.button`
  width: 8px;
  height: 14px;
  margin-left: auto;
  padding: 0;
  border: 0;
  border-radius: 4px;
  background: radial-gradient(circle at 4px 4px, #a3a3a3 0 3px, #3f3f3f 4px);
`;

const LayerList = styled.ul`
  flex: 1;
  min-height: 0;
  margin: 0;
  padding: 0;
  border-right: 12px solid #4a4a4a;
  background: #4d4d4d;
  list-style: none;
`;

const LayerItem = styled.li`
  display: flex;
  height: 30px;
  border-bottom: 1px solid #404040;
  background: #535353;
`;

const LayerName = styled.div`
  display: flex;
  align-items: center;
  flex: 1;
  gap: 6px;
  padding: 0 13px 0 2px;
  background: #6a6a6a;
  color: #f2f2f2;
  font-weight: 500;
  border-left: 1px solid #444;
  > svg { margin-left: auto; }
`;

const Thumb = styled.i`
  width: 26px;
  height: 22px;
  border: 1px solid #333;
  background: #fff;
`;

const Pad = styled.div`
  margin-left: auto;
  font-size: 8px;
`;

const LockIcon = () => (
  <Icon w={9} h={11} box="0 0 9 11"><path d="M.600 4.600h7.800v5.800H.6ZM2.200 4.500V3a2.300 2.300 0 0 1 4.600 0v1.500M4.500 6v3" strokeWidth="1" /></Icon>
);

const filters: [string, React.ReactNode][] = [
  ["ピクセルレイヤー", <Icon w={11} h={10} box="0 0 11 10"><path d="M.600.600h9.800v8.800H.6Z" /><path d="m2 8 2-4 1.500 2L7 4l2 4Z" fill="currentColor" stroke="none" /></Icon>],
  ["調整レイヤー", <Icon w={10} h={10} box="0 0 10 10"><circle cx="5" cy="5" r="4.300" /><path d="M8 2 2 8C-1 4 4-1 8 2Z" fill="currentColor" stroke="none" /></Icon>],
  ["テキストレイヤー", <Icon w={9} h={10} box="0 0 9 10"><path d="M.8 3V1h7.400v2M4.500 1v8M3 9h3" strokeWidth="1.500" /></Icon>],
  ["シェイプレイヤー", <Icon w={10} h={10} box="0 0 10 10"><path d="M2 2h6v6H2Z" /><path d="M0 0h3v3H0ZM7 0h3v3H7ZM0 7h3v3H0ZM7 7h3v3H7Z" fill="currentColor" stroke="none" /></Icon>],
  ["スマートオブジェクト", <Icon w={9} h={10} box="0 0 9 10"><path d="M2.600 5V.600h3L8.400 3v6H5M5.500.500V3H8" /><path d="M0 5h5v5H0Z" fill="currentColor" stroke="none" /></Icon>],
];

const locks: [string, React.ReactNode][] = [
  ["透明ピクセルをロック", <Icon w={10} h={10} box="0 0 10 10"><path d="M.500.500h9v9h-9Z" strokeWidth="1" /><path d="M1 1h2v2H1ZM5 1h2v2H5ZM3 3h2v2H3ZM7 3h2v2H7ZM1 5h2v2H1ZM5 5h2v2H5ZM3 7h2v2H3ZM7 7h2v2H7Z" fill="currentColor" stroke="none" /></Icon>],
  ["画像ピクセルをロック", <Icon w={11} h={11} box="0 0 11 11"><path d="M10.800.200 6.200 7 4.300 5.600ZM3.900 6.200l1.700 1.300C5.500 10.200 3 10.800.3 10.500 2 9.800 1.800 6.700 3.900 6.200Z" fill="currentColor" stroke="none" /></Icon>],
  ["位置をロック", <Move size={11} />],
  ["アートボードをロック", <Icon w={11} h={10} box="0 0 11 10"><path d="M2.500 0v10M0 2.500h6L8.500 5v5M0 8.500h11M8.500 0v2.500H11" strokeWidth="1" /></Icon>],
  ["すべてをロック", <Icon w={9} h={10} box="0 0 9 11"><path d="M2.200 5V3a2.300 2.300 0 0 1 4.600 0v2" /><path d="M0 4.500h9V11H0Z" fill="currentColor" stroke="none" /><path d="M4.500 6.500v2" stroke="#535353" /></Icon>],
];

const LayersPanel = () => (
  <Panel>
    <TabBar items={["レイヤー", "チャンネル", "パス"]} />
    <LayerRow $h={25}>
      <FilterField><Search size={10} /><Select label="レイヤーフィルター" value="種類" w={102} dim /></FilterField>
      <Group $ml={7}>
        {filters.map(([n, icon]) => <IconButton key={n} aria-label={n} $w={19} $dim>{icon}</IconButton>)}
      </Group>
      <Toggle aria-label="フィルターの切り替え" />
    </LayerRow>
    <LayerRow $h={22}>
      <Select label="描画モード" value="通常" w={134} dim />
      <Pad>不透明度 :</Pad>
      <Group $ml={2}><Select label="不透明度" value="100%" w={46} dim split /></Group>
    </LayerRow>
    <LayerRow $h={24}>
      <Group $ml={1}>ロック :</Group>
      <Group>{locks.map(([n, icon]) => <IconButton key={n} aria-label={n} $w={18} $dim>{icon}</IconButton>)}</Group>
      <Pad>塗り :</Pad>
      <Group $ml={2}><Select label="塗り" value="100%" w={46} dim split /></Group>
    </LayerRow>
    <LayerList>
      <LayerItem>
        <IconButton aria-label="レイヤーの表示" $w={24} $h={30}>
          <Icon w={10} h={8} box="0 0 10 8"><path d="M.5 4C3 .5 7 .5 9.500 4 7 7.500 3 7.500.5 4Z" /><circle cx="5" cy="4" r="1.600" fill="currentColor" /></Icon>
        </IconButton>
        <LayerName><Thumb />背景<LockIcon /></LayerName>
      </LayerItem>
    </LayerList>
    <PanelFoot>
      <IconButton aria-label="レイヤーをリンク" $w={22} $dim><Icon w={12} h={6} box="0 0 12 6"><path d="M5 1H3a2 2 0 0 0 0 4h2M7 1h2a2 2 0 0 1 0 4H7M3.500 3h5" /></Icon></IconButton>
      <StyleButton $dim $italic aria-label="レイヤースタイル">fx</StyleButton>
      <IconButton aria-label="マスクを追加" $w={24}><Icon w={11} h={9} box="0 0 11 9"><path fillRule="evenodd" d="M0 0h11v9H0ZM5.500 2a2.500 2.500 0 1 0 0 5 2.500 2.500 0 0 0 0-5Z" fill="currentColor" stroke="none" /></Icon></IconButton>
      <IconButton aria-label="調整レイヤーを作成" $w={20}><Icon w={12} h={12} box="0 0 12 12"><circle cx="5" cy="6" r="4" /><path d="M8 3 2 9C-1 5 4 0 8 3ZM10 10h2l-1 2Z" fill="currentColor" stroke="none" /></Icon></IconButton>
      <IconButton aria-label="新規グループ" $w={22}><Icon w={11} h={9} box="0 0 11 9"><path d="M0 0h4.500l1 1.500H11V9H0Z" fill="currentColor" stroke="none" /></Icon></IconButton>
      <IconButton aria-label="新規レイヤー" $w={22}><NewIcon /></IconButton>
      <IconButton aria-label="レイヤーを削除" $w={22} $dim><TrashIcon /></IconButton>
    </PanelFoot>
  </Panel>
);

/* ---------- callout ---------- */

const Callout = styled.aside`
  position: absolute;
  left: 94px;
  top: 17px;
  pointer-events: none;
  p {
    margin: 7px 0 0 55px;
    color: #ff2e6c;
    font: 700 19px/24px "Noto Sans CJK JP", sans-serif;
    text-shadow: 1px 1px #fff, -1px -1px #fff, 1px -1px #fff, -1px 1px #fff, 2px 0 #fff, -2px 0 #fff, 0 2px #fff, 0 -2px #fff, 0 0 3px #fff;
  }
`;

export default function App() {
  return (
    <Shell>
      <GlobalStyle />
      <SystemBar />
      <TitleBar>
        <Lights>
          <Light $c="#fc5b57" aria-label="閉じる" />
          <Light $c="#fdbc40" aria-label="しまう" />
          <Light $c="#34c84a" aria-label="拡大" />
        </Lights>
        <h1>Adobe Photoshop CC 2018</h1>
      </TitleBar>
      <Options />
      <Workspace>
        <Toolbar />
        <Document />
        <Dock />
        <Column $w={227}>
          <Collapse aria-label="パネルを折りたたむ"><Arrows /></Collapse>
          <SwatchPanel />
          <CharacterPanel />
          <LayersPanel />
        </Column>
      </Workspace>
      <Callout>
        <svg width="50" height="97" viewBox="0 0 50 97" fill="#ff2e6c" aria-hidden="true">
          <path d="M3 0 32 22.500 23 24 48 93.500Q47 97 44 95.500L10 29 2 36Z" />
        </svg>
        <p>ここをクリック</p>
      </Callout>
    </Shell>
  );
}
